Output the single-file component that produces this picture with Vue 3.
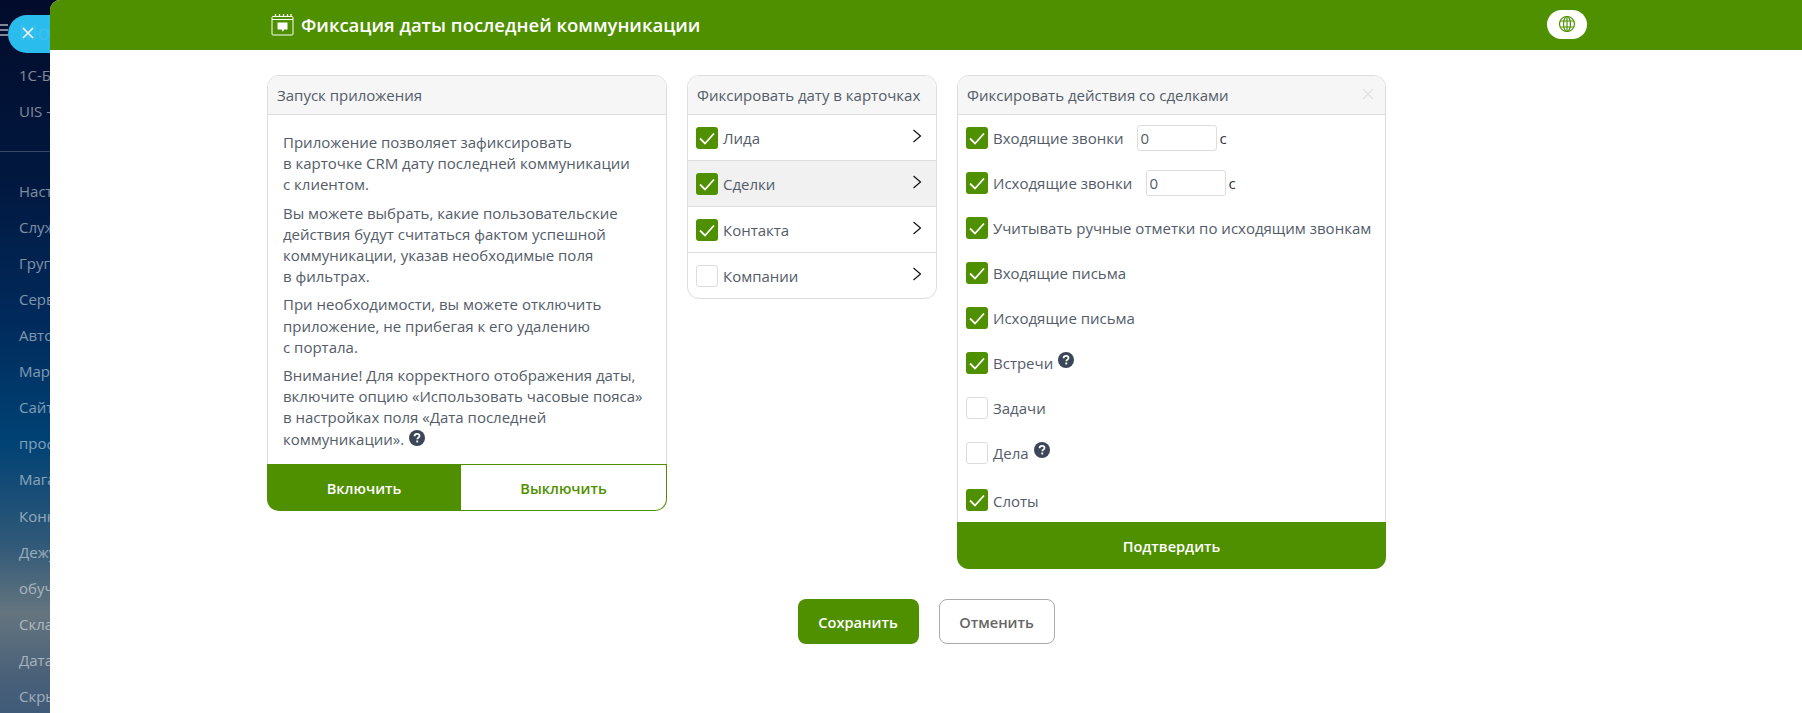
<template>
  <div class="page">
    <aside class="side">
      <div class="side__top">
        <span class="side__burger"><i></i><i></i><i></i></span>
      </div>
      <div class="side__group">
        <a v-for="item in topMenu" :key="item" class="side__item">{{ item }}</a>
      </div>
      <div class="side__line"></div>
      <div class="side__group">
        <a v-for="item in mainMenu" :key="item" class="side__item">{{ item }}</a>
      </div>
    </aside>

    <button class="close" type="button" aria-label="Закрыть">
      <span class="close__logo">Мой</span>
      <svg class="close__x" width="12" height="12" viewBox="0 0 12 12">
        <path d="M1 1l10 10M11 1L1 11" stroke="#fff" stroke-width="1.5" fill="none" />
      </svg>
    </button>

    <main class="drawer">
      <header class="bar">
        <div class="bar__title">
          <svg class="bar__icon" width="23" height="23" viewBox="0 0 23 23" fill="none">
            <rect x="1" y="3.5" width="21" height="18.5" rx="1" stroke="#fff" stroke-width="1" />
            <path d="M1 6.5h21" stroke="#fff" stroke-width="1" />
            <path d="M4.5 1v3M8.5 1v3M12.5 1v3M16.5 1v3M20 1v3" stroke="#fff" stroke-width="1.3" />
            <path d="M6.5 9.5h10v7h-3.2l-1.6 2.2-1-2.2H6.500z" fill="#fff" />
          </svg>
          <h1>Фиксация даты последней коммуникации</h1>
        </div>
        <button class="lang" type="button" aria-label="Язык">
          <svg width="18" height="18" viewBox="0 0 18 18" fill="none" stroke="#4f9000" stroke-width="1.2">
            <circle cx="9" cy="9" r="7.5" />
            <ellipse cx="9" cy="9" rx="3.500" ry="7.5" />
            <path d="M9 1.500v15M2.200 6h13.600M2.200 12h13.600" />
          </svg>
        </button>
      </header>

      <div class="content">
        <div class="cards">
          <section class="card card--start">
            <div class="card__head">Запуск приложения</div>
            <div class="card__text">
              <p>Приложение позволяет зафиксировать<br>в карточке CRM дату последней коммуникации<br>с клиентом.</p>
              <p>Вы можете выбрать, какие пользовательские<br>действия будут считаться фактом успешной<br>коммуникации, указав необходимые поля<br>в фильтрах.</p>
              <p>При необходимости, вы можете отключить<br>приложение, не прибегая к его удалению<br>с портала.</p>
              <p>Внимание! Для корректного отображения даты,<br>включите опцию «Использовать часовые пояса»<br>в настройках поля «Дата последней<br>коммуникации». <svg class="help help--text" width="16" height="16" viewBox="0 0 16 16"><circle cx="8" cy="8" r="8" fill="#3b4658" /><path d="M5.600 6.200c0-1.500 1.100-2.300 2.500-2.300s2.400.8 2.400 2c0 1.700-2.200 1.700-2.200 3.300" stroke="#fff" stroke-width="1.800" fill="none" /><rect x="7.300" y="10.500" width="1.900" height="1.900" fill="#fff" /></svg></p>
            </div>
            <div class="switch">
              <button class="switch__btn switch__btn--on" type="button">Включить</button>
              <button class="switch__btn switch__btn--off" type="button">Выключить</button>
            </div>
          </section>

          <section class="card card--entities">
            <div class="card__head">Фиксировать дату в карточках</div>
            <div
              v-for="(row, i) in entities"
              :key="row.label"
              class="entity"
              :class="{ 'entity--active': i === 1 }"
            >
              <span class="check" :class="{ 'check--on': row.on }">
                <svg v-if="row.on" width="22" height="22" viewBox="0 0 22 22"><path d="M4 11.500l5 5 9-10" stroke="#fff" stroke-width="1.800" fill="none" /></svg>
              </span>
              <span class="label">{{ row.label }}</span>
              <svg class="chevron" width="10" height="14" viewBox="0 0 10 14"><path d="M1.500 1l7 6-7 6" stroke="#111" stroke-width="1.200" fill="none" /></svg>
            </div>
          </section>

          <section class="card card--actions">
            <div class="card__head">
              Фиксировать действия со сделками
              <svg class="card__x" width="12" height="12" viewBox="0 0 12 12"><path d="M1 1l10 10M11 1L1 11" stroke="#e2e2e2" stroke-width="1.200" fill="none" /></svg>
            </div>
            <div class="actions">
              <div v-for="row in actions" :key="row.label" class="action">
                <span class="check" :class="{ 'check--on': row.on }">
                  <svg v-if="row.on" width="22" height="22" viewBox="0 0 22 22"><path d="M4 11.500l5 5 9-10" stroke="#fff" stroke-width="1.800" fill="none" /></svg>
                </span>
                <span class="label">{{ row.label }}</span>
                <svg v-if="row.help" class="help" width="16" height="16" viewBox="0 0 16 16"><circle cx="8" cy="8" r="8" fill="#3b4658" /><path d="M5.600 6.200c0-1.500 1.100-2.300 2.500-2.300s2.400.8 2.400 2c0 1.700-2.200 1.700-2.200 3.300" stroke="#fff" stroke-width="1.800" fill="none" /><rect x="7.300" y="10.500" width="1.900" height="1.900" fill="#fff" /></svg>
                <template v-if="row.sec">
                  <input class="sec" type="text" value="0" />
                  <span class="unit">с</span>
                </template>
              </div>
            </div>
            <button class="confirm" type="button">Подтвердить</button>
          </section>
        </div>

        <div class="footer">
          <button class="btn btn--save" type="button">Сохранить</button>
          <button class="btn btn--cancel" type="button">Отменить</button>
        </div>
      </div>
    </main>
  </div>
</template>

<script setup>
const topMenu = ['1С-Битрикс', 'UIS - телефония']
const mainMenu = [
  'Настройки', 'Служба', 'Группы', 'Сервисы', 'Автоматизация', 'Маркет', 'Сайты',
  'профиль', 'Магазин', 'Коннектор', 'Дежурный', 'обучение', 'Склад', 'Дата', 'Скрыть',
]

const entities = [
  { label: 'Лида', on: true },
  { label: 'Сделки', on: true },
  { label: 'Контакта', on: true },
  { label: 'Компании', on: false },
]

const actions = [
  { label: 'Входящие звонки', on: true, sec: true },
  { label: 'Исходящие звонки', on: true, sec: true },
  { label: 'Учитывать ручные отметки по исходящим звонкам', on: true },
  { label: 'Входящие письма', on: true },
  { label: 'Исходящие письма', on: true },
  { label: 'Встречи', on: true, help: true },
  { label: 'Задачи', on: false },
  { label: 'Дела', on: false, help: true },
  { label: 'Слоты', on: true },
]
</script>

<style>
html, body { margin: 0; height: 100%; overflow: hidden; background: #fff; }
</style>

<style scoped>
.page {
  position: relative;
  height: 713px;
  overflow: hidden;
  font-family: 'Open Sans', 'Liberation Sans', sans-serif;
  color: #535c69;
  font-size: 15px;
}

/* левое меню портала, лежит под панелью */
.side {
  position: absolute;
  left: 0;
  top: 0;
  bottom: 0;
  width: 240px;
  white-space: nowrap;
  background: linear-gradient(180deg, #020b2b 0, #01183f 25%, #012a5c 45%, #004274 62%, #2f5878 76%, #64757f 86%, #4a6079 95%, #3f5a78 100%);
  color: rgba(255, 255, 255, 0.5);
}
.side__top { height: 57px; position: relative; }
.side__burger {
  position: absolute;
  left: -8px;
  top: 24px;
  display: flex;
  flex-direction: column;
  gap: 3px;
}
.side__burger i { display: block; width: 16px; height: 2px; background: rgba(255, 255, 255, 0.5); }
.side__group { padding-left: 19px; }
.side__item { display: block; height: 36.050px; line-height: 36.050px; font-size: 15px; }
.side__line { height: 1px; margin: 22px 0 21px; background: rgba(255, 255, 255, 0.22); }

.close {
  position: absolute;
  z-index: 1;
  left: 8px;
  top: 15px;
  width: 42px;
  height: 38px;
  padding: 0;
  border: none;
  border-radius: 19px 0 0 19px;
  background: #2bbcee;
  overflow: hidden;
}
.close__logo {
  position: absolute;
  left: 11px;
  top: 5px;
  font-size: 22px;
  font-weight: 700;
  color: #35c0f0;
}
.close__x { position: absolute; left: 14px; top: 12px; }

.drawer {
  position: relative;
  z-index: 2;
  height: 100%;
  margin-left: 50px;
  background: #fff;
  border-radius: 10px 0 0 0;
  overflow: hidden;
}

/* шапка */
.bar {
  height: 50px;
  background: #4f9000;
  display: flex;
  align-items: center;
  justify-content: space-between;
  padding: 0 215px 0 221px;
  box-sizing: border-box;
}
.bar__title { display: flex; align-items: center; gap: 7px; }
.bar__icon { margin-top: -2px; }
.bar h1 { margin: 0; font-size: 18.500px; font-weight: 600; color: #fff; line-height: 24px; }
.lang {
  width: 40px;
  height: 29px;
  margin-top: -2px;
  padding: 0;
  border: none;
  border-radius: 15px;
  background: #fff;
  display: flex;
  align-items: center;
  justify-content: center;
}

.content { padding: 25px 0 0; }
.cards {
  display: flex;
  align-items: flex-start;
  gap: 20px;
  padding-left: 217px;
  height: 524px;
}

.card {
  box-sizing: border-box;
  background: #fff;
  border: 1px solid #ddd;
  border-radius: 12px;
}
.card--start { width: 400px; height: 436px; display: flex; flex-direction: column; }
.card--entities { width: 250px; }
.card--actions { width: 429px; }
.card__head {
  position: relative;
  height: 39px;
  line-height: 38px;
  padding-left: 9px;
  background: #f6f6f6;
  border-bottom: 1px solid #ddd;
  border-radius: 11px 11px 0 0;
  box-sizing: border-box;
  font-size: 15px;
}
.card__x { position: absolute; right: 11px; top: 12px; }

.card__text { flex: 1; padding: 17px 15px 0; }
.card__text p { margin: 0 0 7px; line-height: 21.200px; font-size: 15px; }
.help { flex: none; margin: -6px 0 0 0; }
.help--text { margin: 0 0 5px 1px; vertical-align: middle; }

.switch { display: flex; height: 47px; margin: 0 -1px -1px; }
.switch__btn {
  font: 600 14.600px 'Open Sans', 'Liberation Sans', sans-serif;
  border: none;
  padding: 0;
}
.switch__btn--on { width: 194px; background: #4f9000; color: #fff; border-radius: 0 0 0 12px; }
.switch__btn--off {
  flex: 1;
  background: #fff;
  color: #4f9000;
  border: 1px solid #4f9000;
  border-left: none;
  border-radius: 0 0 12px 0;
}

/* чекбоксы */
.check {
  flex: none;
  box-sizing: border-box;
  width: 22px;
  height: 22px;
  border: 1px solid #ddd;
  border-radius: 3px;
  background: #fff;
}
.check--on { background: #4f9000; border: none; }
.check svg { display: block; }
.label { font-size: 15px; white-space: nowrap; margin-top: 1px; }

.entity {
  display: flex;
  align-items: center;
  gap: 5px;
  height: 46px;
  padding: 0 14px 0 8px;
  box-sizing: border-box;
  border-bottom: 1px solid #ddd;
}
.entity:last-child { border-bottom: none; height: 45px; }
.entity--active { background: #f1f1f1; }
.chevron { margin-left: auto; margin-top: -4px; }

.action {
  display: flex;
  align-items: center;
  gap: 5px;
  height: 45px;
  padding-left: 8px;
}
.action:last-child { height: 47px; padding-top: 3px; box-sizing: border-box; }
.sec {
  width: 80px;
  height: 26px;
  box-sizing: border-box;
  margin-left: 9px;
  padding: 0 2px;
  border: 1px solid #ddd;
  border-radius: 3px;
  font: 15px 'Open Sans', 'Liberation Sans', sans-serif;
  color: #535c69;
  outline: none;
}
.unit { margin-left: -3px; color: #333; font-size: 15px; }

.confirm {
  display: block;
  width: calc(100% + 2px);
  height: 47px;
  margin: 0 -1px -1px;
  border: none;
  border-radius: 0 0 12px 12px;
  background: #4f9000;
  color: #fff;
  font: 600 14.600px 'Open Sans', 'Liberation Sans', sans-serif;
}

/* нижние кнопки */
.footer { display: flex; justify-content: center; gap: 20px; }
.btn {
  height: 45px;
  box-sizing: border-box;
  border-radius: 8px;
  font: 600 14.600px 'Open Sans', 'Liberation Sans', sans-serif;
  padding: 0;
}
.btn--save { width: 121px; background: #4f9000; border: none; color: #fff; }
.btn--cancel { width: 116px; background: #fff; border: 1px solid #aaa; color: #666; }
</style>
